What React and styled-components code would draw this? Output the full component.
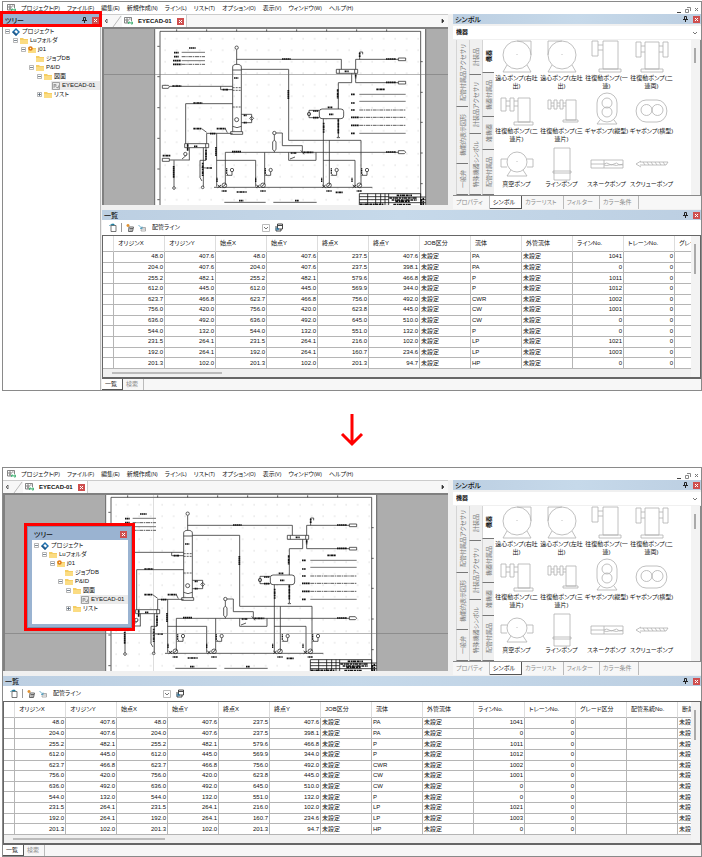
import styled, { createGlobalStyle } from 'styled-components';
import { useState } from 'react';

const GlobalStyle = createGlobalStyle`
  * {
    box-sizing: border-box;
  }
  body {
    margin: 0;
    background: #fff;
    color: #111;
    font-family: 'Liberation Sans', 'Noto Sans CJK JP', sans-serif;
    font-size: 6px;
    line-height: 9px;
    font-feature-settings: 'palt';
  }
  button, select, a {
    font: inherit;
    color: inherit;
    font-feature-settings: inherit;
    text-decoration: none;
    margin: 0;
    padding: 0;
    border: 0;
    border-radius: 0;
    background: none;
  }
  svg {
    display: block;
    flex: none;
    overflow: visible;
  }
`;

const Page = styled.main`
  padding: 1px 0 0 2px;
`;

const Window = styled.section`
  position: relative;
  display: flex;
  flex-direction: column;
  border: 1px solid #8a8a8a;
  background: #f0f0f0;
`;

const MenuBar = styled.header`
  display: flex;
  align-items: center;
  height: 12px;
  padding-left: 4px;
  background: #fff;
`;

const Menu = styled.nav`
  display: flex;
  flex: 1;
  gap: 7px;
  margin-left: 5px;
`;

const MenuButton = styled.button`
  white-space: nowrap;
  line-height: 10px;

  small {
    font-size: 5px;
  }
`;

const WindowButtons = styled.div`
  display: flex;
  gap: 3px;
  padding: 3px 2px 0 0;
`;

const IconButton = styled.button`
  display: grid;
  place-items: center;
  flex: none;
  color: ${(props) => props.$color || '#444'};
`;

const Body = styled.div`
  display: flex;
`;

const Main = styled.div`
  display: flex;
  flex-direction: column;
  flex: 1;
  min-width: 0;
`;

const TopRow = styled.div`
  display: flex;
  gap: 5px;
  height: 196px;
  padding-bottom: 1px;
`;

const PanelTitle = styled.div`
  display: flex;
  align-items: center;
  gap: 5px;
  height: ${(props) => props.$height || 10}px;
  padding: 0 1px 0 2px;
  background: ${(props) => props.$plain ? '#9ab3d1' : 'linear-gradient(90deg, #bccfe2, #c6d9ea 50%, #bccfe2)'};

  h2 {
    flex: 1;
    margin: 0;
    font-size: 7px;
    font-weight: 500;
    line-height: 9px;
  }
`;

const RedClose = styled.button`
  display: grid;
  place-items: center;
  width: 7px;
  height: 7px;
  background: #cf4f4f;
  color: #fff;
`;

/* tree */

const TreePanel = styled.aside`
  position: relative;
  flex: none;
  width: 98px;
  margin-right: 1px;
  border-right: 1px solid #bbb;
  background: #fff;
`;

const HeaderMark = styled.div`
  position: absolute;
  top: -3px;
  left: -3px;
  right: -2px;
  height: 16px;
  border: 3px solid #f00;
  z-index: 2;
`;

const FloatingTree = styled.aside`
  position: absolute;
  top: 55px;
  left: 21px;
  width: 111px;
  border: 3px solid #f00;
  z-index: 2;
`;

const FloatingFrame = styled.div`
  padding: 2px 3px 3px 4px;
  border: 1px solid #7b8ea8;
  background: #9ab3d1;
`;

const TreeList = styled.ul`
  list-style: none;
  margin: 0;
  padding: 1px 0 ${(props) => props.$bottom || 0}px;
  background: #fff;
`;

const TreeRow = styled.li`
  display: flex;
  align-items: center;
  gap: 1px;
  height: 9px;
  padding-left: ${(props) => props.$level * 8 + 2}px;
`;

const Toggle = styled.button`
  width: 5px;
  height: 5px;
  flex: none;
`;

const TreeItem = styled.span`
  display: flex;
  align-items: center;
  gap: 2px;
  flex: 1;
  height: 9px;
  padding-left: 1px;
  white-space: nowrap;
  background: ${(props) => props.$selected ? '#ebebeb' : 'none'};
`;

/* document */

const DocArea = styled.div`
  display: flex;
  flex-direction: column;
  flex: 1;
  min-width: 0;
`;

const DocTabs = styled.div`
  display: flex;
  align-items: center;
  gap: 1px;
  height: 13px;
  padding: 0 3px 0 2px;
  border-top: 1px solid #ccc;
  background: #f7f7f7;
`;

const DocTab = styled.div`
  display: flex;
  align-items: center;
  gap: 5px;
  height: 12px;
  margin-right: auto;
  padding: 0 2px;
  border-right: 1px solid #ccc;
  background: #fff;
  font-weight: bold;
`;

const Canvas = styled.div`
  position: relative;
  height: 178px;
  padding-left: ${(props) => props.$pan}px;
  overflow: hidden;
  border: solid #808080;
  border-width: 2px 0 0 2px;
  background: #adadad;
`;

const Cross = styled.span`
  position: absolute;
  background: ${(props) => props.$vertical ? 'rgba(120, 120, 120, 0.25)' : 'rgba(110, 110, 110, 0.5)'};
  left: ${(props) => props.$vertical || 0}px;
  top: ${(props) => props.$horizontal || 0}px;
  width: ${(props) => props.$vertical ? '1px' : '100%'};
  height: ${(props) => props.$vertical ? '100%' : '1px'};
`;

/* symbol palette */

const SymbolPanel = styled.aside`
  display: flex;
  flex-direction: column;
  flex: none;
  width: 248px;
`;

const SelectBox = styled.label`
  position: relative;
  display: flex;
  align-items: center;
  width: ${(props) => props.$width || 'auto'};

  select {
    flex: 1;
    appearance: none;
    font-weight: ${(props) => props.$bold ? 'bold' : 'normal'};
    line-height: 11px;
    padding-left: 2px;
  }
  svg {
    position: absolute;
    right: 1px;
    pointer-events: none;
  }
`;

const SymbolSelect = styled.div`
  margin: 2px 0 1px;
  padding: 1px;
  background: #fff;
`;

const SymbolBody = styled.div`
  display: flex;
  flex: 1;
  min-height: 0;
  padding-left: 2px;
  border: solid #8a8a8a;
  border-width: 0 1px 1px 0;
`;

const SideTabs = styled.div`
  display: flex;
  flex-direction: column;
  width: 12px;
  margin-left: 1px;
`;

const SideTab = styled.button`
  display: flex;
  align-items: center;
  justify-content: center;
  flex: ${(props) => props.$size};
  width: 12px;
  border-bottom: 1px solid #777;
  border-left: 1px solid #d5d5d5;
  background: ${(props) => props.$active ? '#fff' : '#f0f0f0'};
  color: ${(props) => props.$active ? '#111' : '#777'};
  font-weight: ${(props) => props.$active ? 'bold' : 'normal'};

  span {
    writing-mode: vertical-rl;
    text-orientation: sideways;
    rotate: 180deg;
    white-space: nowrap;
    line-height: 10px;
  }
`;

const SymbolGrid = styled.div`
  display: grid;
  grid-template-columns: repeat(4, 45px);
  grid-auto-rows: 53px;
  flex: 1;
  padding-top: 1px;
  background: #fff;
`;

const SymbolButton = styled.button`
  display: flex;
  flex-direction: column;
  align-items: center;
  white-space: pre-line;
  text-align: center;
  line-height: 8px;
`;

const VScroll = styled.div`
  width: 9px;
  padding: 8px 0 0 3px;
  background: #f3f3f3;

  &::before {
    content: '';
    display: block;
    width: 2px;
    height: ${(props) => props.$size}px;
    background: #aaa;
  }
`;

const BottomTabs = styled.div`
  display: flex;
  align-items: stretch;
  height: ${(props) => props.$height}px;
  background: #f7f7f7;
`;

const BottomTab = styled.button`
  display: flex;
  align-items: center;
  padding: 0 ${(props) => props.$wide ? 6 : 5}px 0 3px;
  border-right: 1px solid ${(props) => props.$active ? '#555' : '#bbb'};
  border-bottom: ${(props) => props.$active ? '1px solid #555' : '0'};
  background: ${(props) => props.$active ? '#fff' : 'none'};
  color: ${(props) => props.$active ? '#111' : '#8c8c8c'};
  white-space: nowrap;
`;

/* list */

const ListPanel = styled.section`
  display: flex;
  flex-direction: column;
`;

const ToolBar = styled.div`
  display: flex;
  align-items: center;
  gap: 4px;
  height: 15px;
  padding-left: 7px;
  background: #fff;
`;

const Divider = styled.span`
  width: 1px;
  height: 9px;
  background: #999;
`;

const TableBox = styled.div`
  display: flex;
  border: solid #666;
  border-width: 1px 1px 2px;
`;

const TableScroll = styled.div`
  flex: 1;
  min-width: 0;
  overflow: hidden;
  background: #f0f0f0;
`;

const Table = styled.table`
  table-layout: fixed;
  width: ${(props) => props.$count * 51 + 11}px;
  height: 133px;
  border-collapse: separate;
  border-spacing: 0;
  background: #fff;
  line-height: 9px;

  th, td {
    padding: 0 1px;
    border: solid #b5b5b5;
    border-width: 0 1px 1px 0;
    text-align: left;
    font-weight: normal;
    white-space: nowrap;
    overflow: hidden;
  }
  th {
    height: 16px;
    padding: 0 4px;
    border-right-color: #ddd;
  }
`;

const MarkerCol = styled.col`
  width: 11px;
`;

const NumberCell = styled.td`
  && {
    text-align: right;
  }
`;

const HScroll = styled.div`
  height: 8px;
  padding: 3px 0 0 9px;

  &::before {
    content: '';
    display: block;
    width: ${(props) => props.$size}px;
    height: 2px;
    background: #bbb;
  }
`;

const ArrowGap = styled.div`
  display: grid;
  place-items: center;
  height: 76px;
  padding-top: 2px;
`;

const menus = [
  ['プロジェクト', 'P'], ['ファイル', 'F'], ['編集', 'E'], ['新規作成', 'N'], ['ライン', 'L'],
  ['リスト', 'T'], ['オプション', 'O'], ['表示', 'V'], ['ウィンドウ', 'W'], ['ヘルプ', 'H'],
];

const treeRows = [
  { level: 0, label: 'プロジェクト', icon: 'project', open: true },
  { level: 1, label: 'Luフォルダ', icon: 'folder', open: true },
  { level: 2, label: 'j01', icon: 'job', open: true },
  { level: 3, label: 'ジョブDB', icon: 'folder' },
  { level: 3, label: 'P&ID', icon: 'folder', open: true },
  { level: 4, label: '図面', icon: 'folder', open: true },
  { level: 5, label: 'EYECAD-01', icon: 'sheet', selected: true },
  { level: 4, label: 'リスト', icon: 'folder', open: false },
];

const sideTabs = [
  [['配管付属品アクセサリ', 67], ['機能的表示図形', 57], ['一般弁', 31]],
  [['計装品', 35], ['計装品アクセサリ', 59], ['特殊機器シンボル', 61]],
  [['機器', 33], ['機器付属品', 44], ['雑機器', 33], ['配管付属品', 45]],
];

const symbols = [
  { label: '遠心ポンプ(右吐\n出)', d: 'M31 14a14 14 0 1 1-28 0a14 14 0 1 1 28 0M17 0H31V14M7 24L3 31H31L27 24M17 13v1' },
  { label: '遠心ポンプ(左吐\n出)', d: 'M31 14a14 14 0 1 1-28 0a14 14 0 1 1 28 0M17 0H3V14M7 24L3 31H31L27 24M17 13v1' },
  { label: '往復動ポンプ(一\n連)', d: 'M2 0H8V15H2ZM8 4H13M8 9H13M13 0H28V28H13ZM9 28H31V31H9Z' },
  { label: '往復動ポンプ(二\n連両)', d: 'M1 1H6V16H1ZM28 1H33V16H28ZM6 5H10M6 11H10M24 5H28M24 11H28M10 1H24V28H10ZM6 28H28V31H6Z' },
  { label: '往復動ポンプ(二\n連片)', d: 'M1 4H6V17H1ZM10 4H14V17H10ZM6 7H10M6 12H10M14 7H18M14 12H18M18 4H30V28H18ZM14 28H33V31H14Z' },
  { label: '往復動ポンプ(三\n連片)', d: 'M3 6H6V15H3ZM9 6H12V15H9ZM15 6H18V15H15ZM6 9H9M6 12H9M12 9H15M12 12H15M18 9H21M18 12H21M21 6H31V26H21ZM18 26H33V28H18Z' },
  { label: 'ギヤポンプ(縦型)', d: 'M7 9a10 10 0 0 1 20 0V18a10 10 0 0 1-20 0ZM12 9a5 5 0 1 0 10 0a5 5 0 1 0-10 0M12 18a5 5 0 1 0 10 0a5 5 0 1 0-10 0M10 26L7 30H27L24 26' },
  { label: 'ギヤポンプ(横型)', d: 'M11 6H22a9 10 0 0 1 0 22H11a9 10 0 0 1 0-22ZM6 16a5 5 0 1 0 11 0a5 5 0 1 0-11 0M17 16a5 5 0 1 0 11 0a5 5 0 1 0-11 0' },
  { label: '真空ポンプ', d: 'M7 15a10 10 0 1 1 20 0a10 10 0 1 1-20 0M7 12H1V20H7M27 12H33V20H27M11 23L7 29H27L23 23M17 14v1' },
  { label: 'ラインポンプ', d: 'M9 1H25V33H9ZM8 24H26V26H8Z' },
  { label: 'スネークポンプ', d: 'M1 13H33V21H1ZM1 17H14M14 13V21M14 17q3-2 5 0t5 0t4 0t5 0M14 18q3 1 5 0t5 0t4 0t5 0' },
  { label: 'スクリューポンプ', d: 'M6 14L1 17L6 20M5 15H33L31 18H5M8 15l2 3m2-3l2 3m2-3l2 3m2-3l2 3m2-3l2 3m2-3l2 3' },
];

const columns = [
  'オリジンX', 'オリジンY', '始点X', '始点Y', '終点X', '終点Y', 'JOB区分', '流体',
  '外管流体', 'ラインNo.', 'トレーンNo.', 'グレード区分', '配管系統No.', '断熱区分',
];

const lines = [
  ['48.0', '407.6', '237.5', '407.6', 'PA', '1041'],
  ['204.0', '407.6', '237.5', '398.1', 'PA', '0'],
  ['255.2', '482.1', '579.6', '466.8', 'P', '1011'],
  ['612.0', '445.0', '569.9', '344.0', 'P', '1012'],
  ['623.7', '466.8', '756.0', '492.0', 'CWR', '1002'],
  ['756.0', '420.0', '623.8', '445.0', 'CW', '1001'],
  ['636.0', '492.0', '645.0', '510.0', 'CW', '0'],
  ['544.0', '132.0', '551.0', '132.0', 'P', '0'],
  ['231.5', '264.1', '216.0', '102.0', 'LP', '1021'],
  ['192.0', '264.1', '160.7', '234.6', 'LP', '1003'],
  ['201.3', '102.0', '201.3', '94.7', 'HP', '0'],
];

const toCells = ([x, y, endX, endY, fluid, no]) => [
  x, y, x, y, endX, endY, '未設定', fluid, '未設定', no, '0', '', '', '未設定',
];

const AppIcon = () => (
  <svg width="9" height="8" viewBox="0 0 18 16" fill="none" stroke="#666" strokeWidth="1.6">
    <path d="M1 1H15V8M1 1V12H8M4 4H8V8H4ZM10 4H13M4 10H8" />
    <path d="M9 14V10H12V12H9M14 10V14H17V10Z" stroke="#2fa866" />
  </svg>
);

const Cross5 = () => (
  <svg width="5" height="5" viewBox="0 0 5 5" stroke="currentColor" strokeWidth="1">
    <path d="M1 1L4 4M4 1L1 4" />
  </svg>
);

const Pin = () => (
  <svg width="5" height="6" viewBox="0 0 5 6" stroke="#222" fill="none">
    <path d="M1.500 .5H3.500V3.500H1.500ZM0 3.500H5M2.500 3.500V6" />
  </svg>
);

const Chevron = ({ boxed }) => (
  <svg width="8" height="8" viewBox="0 0 8 8" fill="none" stroke="#777">
    {boxed && <path d="M.5 .5H7.500V7.500H.5Z" stroke="#bbb" />}
    <path d="M2 3L4 5L6 3" />
  </svg>
);

const Triangle = ({ flip }) => (
  <svg width="4" height="6" viewBox="0 0 4 6" fill={flip ? 'none' : '#333'} stroke="#333" strokeWidth=".7">
    <path d={flip ? 'M3 1V5L1 3Z' : 'M1 1V5L3 3Z'} />
  </svg>
);

const TreeIcon = ({ type }) => {
  if (type === 'project') return (
    <svg width="8" height="8" viewBox="0 0 16 16">
      <path d="M8 0L16 8L8 16L0 8Z" fill="#1d6fae" />
      <path d="M8 4L12 8L8 12L4 8Z" fill="#fff" />
      <path d="M0 8L8 16L11 13L5 7Z" fill="#174c7c" opacity=".7" />
    </svg>
  );
  if (type === 'sheet') return (
    <svg width="8" height="8" viewBox="0 0 16 16" fill="none" stroke="#888" strokeWidth="1.500">
      <path d="M1 1H15V15H1ZM4 4V12M4 5H8V8H4M9 11H13V7M8 9L12 13" />
    </svg>
  );
  return (
    <svg width="8" height="8" viewBox="0 0 16 16">
      <path d="M0 2H6L8 4H16V14H0Z" fill="#f5cd62" />
      <path d="M0 6H16V14H0Z" fill="#fbdc83" />
      {type === 'job' && <circle cx="5" cy="5" r="3" fill="#fff3d8" stroke="#e07a16" strokeWidth="3" />}
    </svg>
  );
};

const Tree = ({ bottom }) => {
  const [closed, setClosed] = useState([]);

  const handleToggle = (label) => {
    if (closed.includes(label)) setClosed(closed.filter((item) => item !== label));
    else setClosed([...closed, label]);
  }

  return (
    <TreeList $bottom={bottom}>
      {treeRows.map((row) => (
        <TreeRow key={row.label} $level={row.level}>
          {row.open === undefined ? <Toggle as="span" /> : (
            <Toggle aria-label={`${row.label} 開閉`} onClick={() => handleToggle(row.label)}>
              <svg width="5" height="5" viewBox="0 0 5 5" fill="#fff" stroke="#999" strokeWidth=".7">
                <path d="M.5 .5H4.500V4.500H.5Z" />
                <path d={row.open !== closed.includes(row.label) ? 'M1 2.500H4' : 'M1 2.500H4M2.500 1V4'} stroke="#456" />
              </svg>
            </Toggle>
          )}
          <TreeItem $selected={row.selected}>
            <TreeIcon type={row.icon} />
            {row.label}
          </TreeItem>
        </TreeRow>
      ))}
    </TreeList>
  );
}

// one unit is a third of a pixel
const Drawing = () => (
  <svg width="272" height="177" viewBox="162 24 816 531" fill="none" stroke="#333" strokeWidth="2.400">
    <defs>
      <pattern id="dots" x="178" y="36" width="34.500" height="34.500" patternUnits="userSpaceOnUse">
        <path d="M16 16h3v3h-3z" fill="#c4c4c4" stroke="none" />
      </pattern>
    </defs>
    <path d="M162 24H978V555H162Z" fill="#fff" stroke="none" />
    <path d="M180 32H962V555H180Z" fill="url(#dots)" stroke="none" />
    <path d="M164 24V555M180 555V31H962V555M977 24V555M172 76h7M172 167h7M172 260h7M172 352h7M172 444h7M172 536h7M962 122h6M962 214h6M962 304h6M962 396h6M962 488h6" />
    <path d="M230 25v6M320 25v6M410 25v6M500 25v6M590 25v6M680 25v6M770 25v6M860 25v6" />
    {/* column */}
    <path d="M398 332V138Q398 130 411 130Q424 130 424 138V332M398 147H424M398 316Q411 324 424 316M392 332H428V340H392Z" />
    <path d="M398 200H424M398 208H424M398 258H424" strokeDasharray="6 3" />
    <circle cx="410" cy="296" r="6" />
    <path d="M424 280H455V305H424M455 286L461 292L455 298L449 292Z" />
    <circle cx="410" cy="80" r="5" />
    <path d="M410 86V130M410 115H724V145M424 145H566V358H783V490M688 358V490" />
    {/* feed and reboiler */}
    <path d="M187 193H205L208 197L205 202H187ZM208 196H398M362 196V206H398M257 368V248H398M320 368V337H398M305 323L320 334M376 323L382 335M350 337V497" />
    <path d="M254 368H326V380H254ZM263 368V380M317 368V380M268 380V418M187 412H208V421H187ZM208 417H268M222 418V497M310 380V497M318 380V418H300V470L306 480" />
    <circle cx="256" cy="399" r="5" />
    <circle cx="222" cy="501" r="4" />
    <circle cx="308" cy="499" r="4" />
    <path d="M246 414L260 402M305 440L320 441" />
    {/* pump headers */}
    <path d="M350 418H467V497M376 490V394H895M494 394V490M342 499H817M895 389H913L917 394L913 398H895Z" />
    {[373, 489, 687, 778].map((x) => (
      <g key={x}>
        <circle cx={x} cy="493" r="7" />
        <path d={`M${x - 20} 492l10 8m0-8l-10 8M${x - 4} 497l8-8`} strokeWidth="3" />
        <circle cx={x + 23} cy="447" r="5" />
        <path d={`M${x + 23} 452V463H${x + 7}l4-4`} />
        <path d={`M${x - 8} 510h16M${x - 22} 470v14M${x + 7} 442v16`} stroke="#111" strokeWidth="4" strokeDasharray="3 1 5 1" />
      </g>
    ))}
    <circle cx="523" cy="336" r="5" />
    <path d="M523 341V358M523 390V394M518 362Q523 354 528 362V386Q523 394 518 386ZM528 336H547V374H607V394M566 394V418H648V394M602 388L612 400M570 414L585 408" />
    {/* drum and condenser */}
    <path d="M666 264H723Q731 264 731 272V285Q731 293 723 293H666Q658 293 658 285V272Q658 264 666 264ZM658 268H627V290H658M715 264V185H755V157M670 293V497M670 418H765V497M715 293V346L719 350H711L715 346" />
    <circle cx="627" cy="279" r="5" />
    <path d="M709 145H773V157H709ZM718 145V157M764 145V157M767 145V115H895M767 157V185H895M895 111H917V119H895ZM895 181H917V189H895ZM779 115V93H788V100" />
    {/* line legends */}
    <path d="M245 94H315M245 119H315M778 220H917M778 241H917M778 337H917" strokeWidth="2" />
    <path d="M245 107H315M245 130H315M778 267H917M778 289H917M778 313H917" strokeDasharray="12 2 4 2" />
    <path d="M373 544H497M520 544H650" />
    {/* annotations */}
    <g stroke="#111" strokeWidth="5" strokeDasharray="5 1 3 1 7 1">
      <path d="M267 81H287M222 95H236M222 107H236M219 119H242M219 130H244M217 195H245M280 246H308M280 323H305M350 323H377M396 392H424M402 171H415M282 376H293M188 404H212M320 441H336M410 513H440M417 539H430M368 206H384" />
      <path d="M546 114H572M858 114H888M858 184H888M858 393H888M829 205H855M753 220H765M753 246H765M753 267H765M753 289H777M753 313H777M753 337H765M734 151H746M683 259H697M687 280H700M707 514H728M585 539H597M572 396H590M610 394H640M330 338H346" />
      <path d="M221 435V470M308 425V465M318 386V416M348 378V406M565 207V235M713 205V234M671 305V335M715 295V338M779 95V108M767 160V172M431 283H441M431 305H441M639 270H655M639 290H655M263 370V390" />
    </g>
    {/* title block */}
    <path d="M778 518H962V555M778 518V553H866V518M778 527H866M778 536H866M778 545H866M803 518V553M827 518V553M842 518V553M855 518V553M866 545H977M866 528H977M962 536H977" stroke="#111" />
    <g stroke="#111" strokeWidth="5" strokeDasharray="8 2 4 1 11 2">
      <path d="M890 523H936M868 531H950M875 537H950M886 541H930M780 550H850M880 551H932M964 534V553" />
      <path d="M970 530V553" />
    </g>
  </svg>
);

const SideTabColumn = ({ tabs }) => (
  <SideTabs>
    {tabs.map(([label, size]) => (
      <SideTab key={label} $size={size} $active={label === '機器'}><span>{label}</span></SideTab>
    ))}
  </SideTabs>
);

const Symbols = () => (
  <SymbolPanel>
    <PanelTitle>
      <h2>シンボル</h2>
      <Pin />
      <RedClose aria-label="シンボルを閉じる"><Cross5 /></RedClose>
    </PanelTitle>
    <SymbolSelect>
      <SelectBox $bold>
        <select aria-label="シンボル分類"><option>機器</option></select>
        <Chevron />
      </SelectBox>
    </SymbolSelect>
    <SymbolBody>
      {sideTabs.map((tabs) => <SideTabColumn key={tabs[0][0]} tabs={tabs} />)}
      <SymbolGrid>
        {symbols.map((symbol) => (
          <SymbolButton key={symbol.label}>
            <svg width="34" height="33" viewBox="0 0 34 33" fill="none" stroke="#b0b0b0" strokeWidth=".8">
              <path d={symbol.d} />
            </svg>
            {symbol.label}
          </SymbolButton>
        ))}
      </SymbolGrid>
      <VScroll $size={15} />
    </SymbolBody>
    <BottomTabs $height={13}>
      {['プロパティ', 'シンボル', 'カラーリスト', 'フィルター', 'カラー条件'].map((label) => (
        <BottomTab key={label} $wide $active={label === 'シンボル'}>{label}</BottomTab>
      ))}
    </BottomTabs>
  </SymbolPanel>
);

const Document = ({ pan, horizontal, vertical }) => (
  <DocArea>
    <DocTabs>
      <IconButton aria-label="前のタブ"><Triangle flip /></IconButton>
      <svg width="12" height="12" viewBox="0 0 12 12" fill="none" stroke="#bbb"><path d="M4 12L12 1" /></svg>
      <DocTab>
        <AppIcon />
        EYECAD-01
        <RedClose aria-label="EYECAD-01を閉じる"><Cross5 /></RedClose>
      </DocTab>
      <IconButton aria-label="次のタブ"><Triangle /></IconButton>
    </DocTabs>
    <Canvas $pan={pan}>
      <Drawing />
      <Cross $horizontal={horizontal} />
      {vertical && <Cross $vertical={vertical} />}
    </Canvas>
  </DocArea>
);

const LineList = ({ count, scroll }) => (
  <ListPanel>
    <PanelTitle>
      <h2>一覧</h2>
      <Pin />
      <RedClose aria-label="一覧を閉じる"><Cross5 /></RedClose>
    </PanelTitle>
    <ToolBar>
      <IconButton aria-label="更新">
        <svg width="8" height="9" viewBox="0 0 16 18" fill="none" stroke="#555" strokeWidth="1.600">
          <path d="M4 5H14V17H4Z" /><path d="M1 6Q3 1 10 3L8 1M10 3L8 5" stroke="#167a9c" strokeWidth="2" />
        </svg>
      </IconButton>
      <Divider />
      <IconButton aria-label="選択">
        <svg width="8" height="8" viewBox="0 0 16 16" fill="none" stroke="#555" strokeWidth="1.800">
          <path d="M6 6H15L13 15H5ZM7 9H14M7 12H13" /><path d="M1 3H7M4 0V6" stroke="#e0902e" strokeWidth="3" />
        </svg>
      </IconButton>
      <IconButton aria-label="解除">
        <svg width="8" height="8" viewBox="0 0 16 16" fill="none" stroke="#999" strokeWidth="1.600">
          <path d="M7 7H15V14H6ZM8 10H14" /><path d="M1 2L8 9M8 5V9H4" stroke="#4a9cc0" />
        </svg>
      </IconButton>
      <SelectBox $width="121px">
        <select aria-label="一覧の種類"><option>配管ライン</option></select>
        <Chevron boxed />
      </SelectBox>
      <IconButton aria-label="一覧へ出力">
        <svg width="8" height="9" viewBox="0 0 16 18" fill="none" stroke="#333" strokeWidth="1.800">
          <path d="M5 2H15V12H5ZM5 5H15M2 6V16H12V12" /><path d="M1 12H7M4 9L7 12L4 15" stroke="#1472a8" />
        </svg>
      </IconButton>
    </ToolBar>
    <TableBox>
      <TableScroll>
        <Table $count={count}>
          <colgroup>
            <MarkerCol />
            {columns.slice(0, count).map((column) => <col key={column} />)}
          </colgroup>
          <thead>
            <tr>
              <th />
              {columns.slice(0, count).map((column) => <th key={column} scope="col">{column}</th>)}
            </tr>
          </thead>
          <tbody>
            {lines.map((line, i) => (
              <tr key={i}>
                <td />
                {toCells(line).slice(0, count).map((value, j) => (
                  /^\d/.test(value) ? <NumberCell key={j}>{value}</NumberCell> : <td key={j}>{value}</td>
                ))}
              </tr>
            ))}
          </tbody>
        </Table>
        <HScroll $size={scroll} />
      </TableScroll>
      <VScroll $size={30} />
    </TableBox>
    <BottomTabs $height={11}>
      <BottomTab $active>一覧</BottomTab>
      <BottomTab>検索</BottomTab>
    </BottomTabs>
  </ListPanel>
);

const WindowMenu = () => (
  <MenuBar>
    <AppIcon />
    <Menu>
      {menus.map(([label, key]) => (
        <MenuButton key={key}>{label}<small>({key})</small></MenuButton>
      ))}
    </Menu>
    <WindowButtons>
      <IconButton aria-label="最小化">
        <svg width="6" height="6" viewBox="0 0 6 6" stroke="currentColor"><path d="M1 5.500H5" /></svg>
      </IconButton>
      <IconButton aria-label="元に戻す">
        <svg width="6" height="6" viewBox="0 0 6 6" fill="none" stroke="#888"><path d="M.5 2.500H3.500V5.500H.5ZM2 .5H5.500V4" /></svg>
      </IconButton>
      <IconButton aria-label="閉じる" $color="#777"><Cross5 /></IconButton>
    </WindowButtons>
  </MenuBar>
);

function App() {
  return (
    <Page>
      <GlobalStyle />
      <Window>
        <WindowMenu />
        <Body>
          <TreePanel>
            <HeaderMark />
            <PanelTitle $plain $height={12}>
              <h2>ツリー</h2>
              <Pin />
              <RedClose aria-label="ツリーを閉じる"><Cross5 /></RedClose>
            </PanelTitle>
            <Tree />
          </TreePanel>
          <Main>
            <TopRow>
              <Document pan={50} horizontal={45} />
              <Symbols />
            </TopRow>
            <LineList count={12} scroll={110} />
          </Main>
        </Body>
      </Window>
      <ArrowGap>
        <svg width="24" height="34" viewBox="0 0 24 34" fill="none" stroke="#f00" strokeWidth="3">
          <path d="M12 1V31M2 21L12 31L22 21" />
        </svg>
      </ArrowGap>
      <Window>
        <WindowMenu />
        <FloatingTree>
          <FloatingFrame>
            <PanelTitle $plain $height={11}>
              <h2>ツリー</h2>
              <RedClose aria-label="ツリーを閉じる"><Cross5 /></RedClose>
            </PanelTitle>
            <Tree bottom={11} />
          </FloatingFrame>
        </FloatingTree>
        <Main>
          <TopRow>
            <Document pan={100} horizontal={138} vertical={148} />
            <Symbols />
          </TopRow>
          <LineList count={14} scroll={152} />
        </Main>
      </Window>
    </Page>
  );
}

export default App;
